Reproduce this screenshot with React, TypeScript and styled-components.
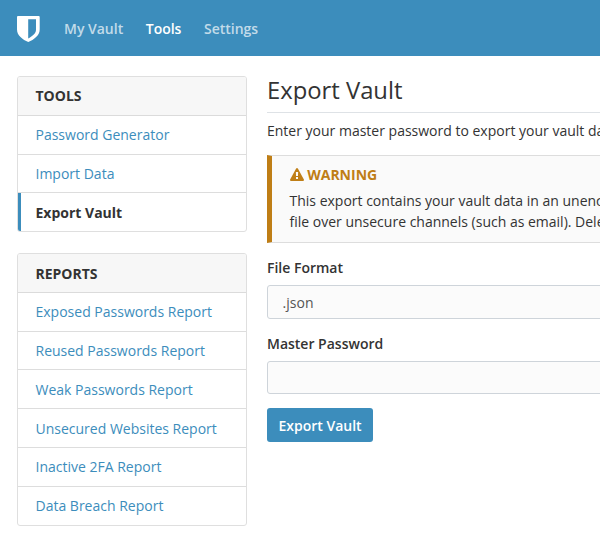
import React from "react";
import styled, { createGlobalStyle } from "styled-components";

const GlobalStyle = createGlobalStyle`
  *, *::before, *::after { box-sizing: border-box; }
  body {
    margin: 0;
    background: #fff;
    color: #333;
    font: 14px/21px "Open Sans", "Noto Sans", sans-serif;
  }
`;

const Page = styled.div`
  height: 547px;
  overflow: hidden;
`;

const Navbar = styled.header`
  display: flex;
  align-items: center;
  height: 56px;
  padding-left: 17px;
  background: #3c8dbc;
`;

const Brand = styled.svg`
  display: block;
  width: 23px;
  height: 26px;
  margin: 2px 24px 0 0;
  fill: #fff;
`;

const Nav = styled.nav`
  display: flex;
  gap: 22.5px;
  padding-top: 1px;
`;

const NavLink = styled.a<{ $active?: boolean }>`
  font-weight: 600;
  color: ${(p) => (p.$active ? "#fff" : "rgba(255, 255, 255, 0.7)")};
`;

const Layout = styled.div`
  display: grid;
  grid-template-columns: 230px 690px;
  column-gap: 20px;
  padding: 20px 0 0 17px;
`;

const Sidebar = styled.aside`
  display: flex;
  flex-direction: column;
  gap: 21px;
`;

const Card = styled.section`
  border: 1px solid #dfdfdf;
  border-radius: 3px;
  overflow: hidden;
`;

const CardHeader = styled.h3`
  margin: 0;
  padding: 8.4px 17.5px;
  border-bottom: 1px solid #dbdbdb;
  background: #f7f7f7;
  font-size: 14px;
  line-height: 21px;
  font-weight: 700;
  text-transform: uppercase;
`;

const CardLink = styled.a<{ $active?: boolean }>`
  display: block;
  padding: 8.4px 17.5px;
  border-bottom: 1px solid #ddd;
  color: ${(p) => (p.$active ? "#333" : "#3c8dbc")};
  font-weight: ${(p) => (p.$active ? 700 : 400)};
  box-shadow: ${(p) => (p.$active ? "inset 3px 0 0 #3c8dbc" : "none")};

  &:last-child { border-bottom: 0; }
`;

const Title = styled.h1`
  margin: 0 0 7px;
  height: 37px;
  border-bottom: 1px solid #dee2e6;
  font-size: 23.8px;
  line-height: 28.5px;
  font-weight: 400;
`;

const Intro = styled.p`
  margin: 0 0 14px;
  white-space: nowrap;
`;

const Callout = styled.div`
  height: 88px;
  margin-bottom: 14px;
  padding: 8px 17.5px;
  border: 1px solid #ddd;
  border-left: 5px solid #bf7e16;
  background: #fafafa;
  white-space: nowrap;
`;

const CalloutTitle = styled.h3`
  display: flex;
  align-items: center;
  gap: 3.7px;
  margin: 0 0 5px;
  color: #bf7e16;
  font-size: 14px;
  line-height: 21px;
  font-weight: 700;
  text-transform: uppercase;
`;

const WarningIcon = styled.svg`
  width: 14px;
  height: 14px;
  fill: currentColor;
`;

const Field = styled.div`
  display: flex;
  flex-direction: column;
  gap: 7px;
  margin-bottom: 14px;
`;

const Label = styled.label`
  font-weight: 600;
`;

const Control = styled.div<{ $height: number }>`
  height: ${(p) => p.$height}px;
  padding: 6px 14.6px;
  border: 1px solid #ced4da;
  border-radius: 3px;
  background: #fbfbfb;
  color: #555;
`;

const Button = styled.button`
  display: block;
  width: 106px;
  height: 34px;
  padding: 0;
  border: 0;
  border-radius: 3px;
  background: #3c8dbc;
  color: #fff;
  font: 600 14px/21px "Open Sans", "Noto Sans", sans-serif;
`;

const tools = ["Password Generator", "Import Data", "Export Vault"];
const reports = [
  "Exposed Passwords Report",
  "Reused Passwords Report",
  "Weak Passwords Report",
  "Unsecured Websites Report",
  "Inactive 2FA Report",
  "Data Breach Report",
];

function LinkCard({ title, links, active }: { title: string; links: string[]; active?: string }) {
  return (
    <Card>
      <CardHeader>{title}</CardHeader>
      {links.map((link) => (
        <CardLink key={link} $active={link === active}>{link}</CardLink>
      ))}
    </Card>
  );
}

export default function App() {
  return (
    <Page>
      <GlobalStyle />
      <Navbar>
        <Brand viewBox="0 0 23 26" aria-label="Bitwarden">
          <path
            fillRule="evenodd"
            d="M1 0H21.7Q22.7 0 22.7 1V13.5C22.7 19.5 17 23.6 11.3 26C5.6 23.6 0 19.5 0 13.5V1Q0 0 1 0ZM11.2 3.2V22.4C15 20.4 19 17.6 19 13.7V3.2Z"
          />
        </Brand>
        <Nav>
          <NavLink>My Vault</NavLink>
          <NavLink $active>Tools</NavLink>
          <NavLink>Settings</NavLink>
        </Nav>
      </Navbar>
      <Layout>
        <Sidebar>
          <LinkCard title="Tools" links={tools} active="Export Vault" />
          <LinkCard title="Reports" links={reports} />
        </Sidebar>
        <main>
          <Title>Export Vault</Title>
          <Intro>Enter your master password to export your vault data.</Intro>
          <Callout>
            <CalloutTitle>
              <WarningIcon viewBox="0 0 1792 1792">
                <path d="M1024 1375v-190q0-14-9.5-23.5t-22.5-9.5h-192q-13 0-22.5 9.5t-9.5 23.5v190q0 14 9.5 23.5t22.5 9.5h192q13 0 22.5-9.5t9.5-23.5zm-2-374l18-459q0-12-10-19-13-11-24-11h-220q-11 0-24 11-10 7-10 21l17 457q0 10 10 16.5t24 6.5h185q14 0 23.5-6.5t10.5-16.5zm-14-934l768 1408q35 63-2 126-17 29-46.5 46t-63.5 17h-1536q-34 0-63.5-17t-46.5-46q-37-63-2-126l768-1408q17-31 47-49t65-18 65 18 47 49z" />
              </WarningIcon>
              Warning
            </CalloutTitle>
            This export contains your vault data in an unencrypted format.
            <br />
            file over unsecure channels (such as email). Delete it
          </Callout>
          <Field>
            <Label>File Format</Label>
            <Control $height={34}>.json</Control>
          </Field>
          <Field>
            <Label>Master Password</Label>
            <Control $height={33} />
          </Field>
          <Button>Export Vault</Button>
        </main>
      </Layout>
    </Page>
  );
}
